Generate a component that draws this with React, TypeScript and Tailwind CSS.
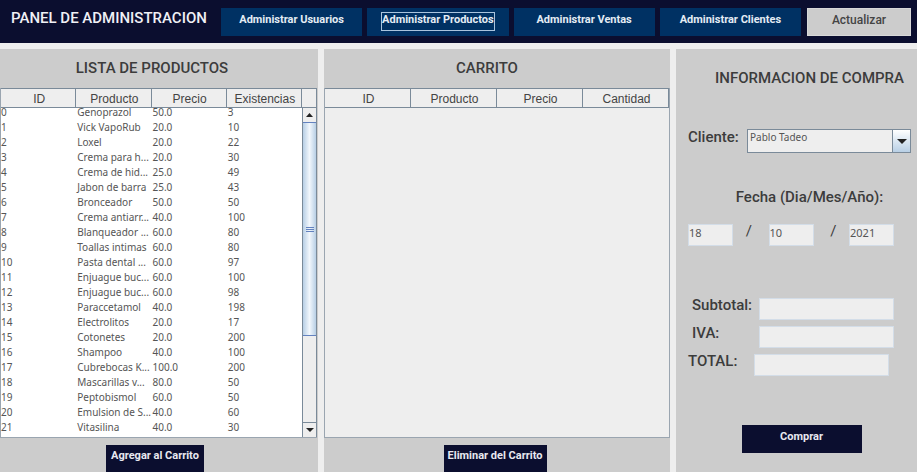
import React from "react";

type Product = [id: number, name: string, price: string, stock: number];

const products: Product[] = [
  [0, "Genoprazol", "50.0", 3],
  [1, "Vick VapoRub", "20.0", 10],
  [2, "Loxel", "20.0", 22],
  [3, "Crema para h...", "20.0", 30],
  [4, "Crema de hid...", "25.0", 49],
  [5, "Jabon de barra", "25.0", 43],
  [6, "Bronceador", "50.0", 50],
  [7, "Crema antiarr...", "40.0", 100],
  [8, "Blanqueador ...", "60.0", 80],
  [9, "Toallas intimas", "60.0", 80],
  [10, "Pasta dental ...", "60.0", 97],
  [11, "Enjuague buc...", "60.0", 100],
  [12, "Enjuague buc...", "60.0", 98],
  [13, "Paraccetamol", "40.0", 198],
  [14, "Electrolitos", "20.0", 17],
  [15, "Cotonetes", "20.0", 200],
  [16, "Shampoo", "40.0", 100],
  [17, "Cubrebocas K...", "100.0", 200],
  [18, "Mascarillas v...", "80.0", 50],
  [19, "Peptobismol", "60.0", 50],
  [20, "Emulsion de S...", "40.0", 60],
  [21, "Vitasilina", "40.0", 30],
];

const tabs = [
  { label: "Administrar Usuarios", focused: false },
  { label: "Administrar Productos", focused: true },
  { label: "Administrar Ventas", focused: false },
  { label: "Administrar Clientes", focused: false },
];

function HeaderRow({ titles }: { titles: string[] }) {
  return (
    <thead>
      <tr className="h-5 bg-[#eeeeee]">
        {titles.map((t) => (
          <th
            key={t}
            scope="col"
            className="border-y border-r border-[#7a8a99] p-0 pt-[3px] pl-0.5 text-center font-['Liberation_Sans',sans-serif] text-[12px] leading-[15px] font-normal text-[#444444]"
          >
            {t}
          </th>
        ))}
      </tr>
    </thead>
  );
}

function ScrollBar() {
  return (
    <div className="flex w-[15px] flex-col">
      <div className="h-5 border-y border-r border-[#7a8a99] bg-[#eeeeee]" />
      <div className="flex flex-1 flex-col border-x border-[#7a8a99] bg-[#eeeeee]">
        <button type="button" aria-label="Subir" className="flex h-[14px] items-center justify-center">
          <svg width="7" height="4" viewBox="0 0 7 4" aria-hidden="true">
            <path d="M3.5 0 7 4H0z" fill="#222" />
          </svg>
        </button>
        <div className="flex h-[214px] flex-col items-center justify-center gap-px border-y border-[#6382bf] bg-linear-to-r from-[#b8cfe5] via-[#f2f7fc] to-[#b8cfe5]">
          <span className="h-px w-2 bg-[#6382bf]" />
          <span className="h-px w-2 bg-[#6382bf]" />
          <span className="h-px w-2 bg-[#6382bf]" />
        </div>
        <div className="flex-1" />
        <button
          type="button"
          aria-label="Bajar"
          className="flex h-[15px] items-center justify-center border-t border-[#7a8a99]"
        >
          <svg width="8" height="4" viewBox="0 0 8 4" aria-hidden="true">
            <path d="M0 0H8L4 4z" fill="#222" />
          </svg>
        </button>
      </div>
    </div>
  );
}

function PanelTitle({ children }: { children: React.ReactNode }) {
  return <h2 className="flex h-[39px] items-center justify-center text-[15px] font-medium">{children}</h2>;
}

const field =
  "h-[22px] border border-[#d3dde8] bg-[#eeeeee] pb-1.5 font-['Noto_Sans',sans-serif] text-[11px] text-[#555555] outline-none";

function DateField({ label, value }: { label: string; value: string }) {
  return <input aria-label={label} defaultValue={value} className={`${field} w-[45px]`} />;
}

function TotalRow({ id, label, className }: { id: string; label: string; className: string }) {
  return (
    <div className={`flex h-7 items-start justify-between ${className}`}>
      <label htmlFor={id} className="text-[15px] leading-[14px] font-medium">
        {label}
      </label>
      <input id={id} readOnly className={`${field} w-[135px]`} />
    </div>
  );
}

export default function App() {
  return (
    <div className="flex min-h-screen flex-col bg-[#eeeeee] font-[Roboto,sans-serif] text-[#3c3c3c]">
      <header className="flex h-[43px] items-start gap-1.5 bg-[#0b0e2f] pt-2 pr-1.5 pl-[11px]">
        <h1 className="w-[204px] text-[15px] leading-5 font-medium whitespace-nowrap text-[#f0f0f5]">
          PANEL DE ADMINISTRACION
        </h1>
        <nav className="grid flex-1 grid-cols-4 gap-[5px]">
          {tabs.map((tab) => (
            <button
              key={tab.label}
              type="button"
              className="flex h-7 items-start justify-center bg-[#003163] pt-1 text-[11px] font-bold text-[#e4ecf4]"
            >
              <span
                className={`h-[19px] border leading-[14px] whitespace-nowrap ${
                  tab.focused ? "border-[#a9c4de]" : "border-transparent"
                }`}
              >
                {tab.label}
              </span>
            </button>
          ))}
        </nav>
        <button
          type="button"
          className="h-7 w-[104px] border border-[#d8d8d8] bg-[#cccccc] pb-1 text-[12px] font-medium text-[#444444]"
        >
          Actualizar
        </button>
      </header>

      <main className="mt-1.5 grid flex-1 grid-cols-[318fr_346fr_241fr] gap-1.5">
        <section className="flex min-w-0 flex-col bg-[#cccccc]">
          <PanelTitle>
            <span className="pr-[14px]">LISTA DE PRODUCTOS</span>
          </PanelTitle>
          <div className="mr-px flex flex-1 border-b border-l border-[#9aa5b0] bg-white">
            <div className="min-w-0 flex-1">
              <table className="w-full table-fixed border-separate border-spacing-0 font-['Noto_Sans',sans-serif] text-[10px] text-[#555555]">
                <HeaderRow titles={["ID", "Producto", "Precio", "Existencias"]} />
                <tbody>
                  {products.map(([id, name, price, stock], i) => (
                    <tr key={id} className={i === 0 ? "h-3 align-top leading-[9px]" : "h-[15px] leading-[15px]"}>
                      <td className="p-0">{id}</td>
                      <td className="p-0 pl-px whitespace-nowrap">{name}</td>
                      <td className="p-0 pl-px">{price}</td>
                      <td className="p-0 pl-px">{stock}</td>
                    </tr>
                  ))}
                </tbody>
              </table>
            </div>
            <ScrollBar />
          </div>
          <div className="flex h-[34px] justify-center pt-[7px] pr-2">
            <button type="button" className="w-[98px] bg-[#0b0e2f] pb-1 text-[11px] font-bold text-[#e8e8f0]">
              Agregar al Carrito
            </button>
          </div>
        </section>

        <section className="flex min-w-0 flex-col bg-[#cccccc]">
          <PanelTitle>
            <span className="pr-5">CARRITO</span>
          </PanelTitle>
          <div className="flex-1 border-r border-b border-l border-[#9aa5b0] bg-[#eeeeee]">
            <table className="w-full table-fixed border-separate border-spacing-0">
              <HeaderRow titles={["ID", "Producto", "Precio", "Cantidad"]} />
            </table>
          </div>
          <div className="flex h-[34px] justify-center pt-[7px] pr-1">
            <button type="button" className="w-[103px] bg-[#0b0e2f] pb-1 text-[11px] font-bold text-[#e8e8f0]">
              Eliminar del Carrito
            </button>
          </div>
        </section>

        <section className="flex min-w-0 flex-col bg-[#cccccc] pr-1.5 pl-3">
          <h2 className="pt-[19px] pl-5 text-center text-[15px] leading-5 font-medium whitespace-nowrap">
            INFORMACION DE COMPRA
          </h2>

          <div className="mt-[41px] flex items-start justify-between">
            <label htmlFor="cliente" className="text-[15px] leading-4 font-medium">
              Cliente:
            </label>
            <div className="relative w-[164px]">
              <select
                id="cliente"
                className="block h-6 w-full appearance-none border border-[#7a8a99] bg-[#eeeeee] pb-2 pl-0.5 font-['Noto_Sans',sans-serif] text-[10px] text-[#555555] outline-none"
              >
                <option>Pablo Tadeo</option>
              </select>
              <span className="pointer-events-none absolute inset-y-0 right-0 flex w-[19px] items-center justify-center border border-[#7a8a99] bg-linear-to-b from-white to-[#b8cfe5]">
                <svg width="10" height="5" viewBox="0 0 10 5" aria-hidden="true">
                  <path d="M0 0H10L5 5z" fill="#222" />
                </svg>
              </span>
            </div>
          </div>

          <fieldset className="mt-9">
            <legend className="w-full pl-5 text-center text-[15px] leading-4 font-medium">
              Fecha (Dia/Mes/Año):
            </legend>
            <div className="mt-[19px] mr-[17px] flex items-start text-[15px] leading-[14px]">
              <DateField label="Dia" value="18" />
              <span className="flex-1 pr-1 text-center">/</span>
              <DateField label="Mes" value="10" />
              <span className="flex-1 pl-1 text-center">/</span>
              <DateField label="Año" value="2021" />
            </div>
          </fieldset>

          <div className="mt-[52px]">
            <TotalRow id="subtotal" label="Subtotal:" className="mr-[17px] ml-1" />
            <TotalRow id="iva" label="IVA:" className="mr-[17px] ml-1" />
            <TotalRow id="total" label="TOTAL:" className="mr-[22px]" />
          </div>

          <button
            type="button"
            className="mt-[43px] ml-1 h-7 w-[120px] self-center bg-[#0b0e2f] pb-1 text-[11px] font-bold text-[#e8e8f0]"
          >
            Comprar
          </button>
        </section>
      </main>
    </div>
  );
}
